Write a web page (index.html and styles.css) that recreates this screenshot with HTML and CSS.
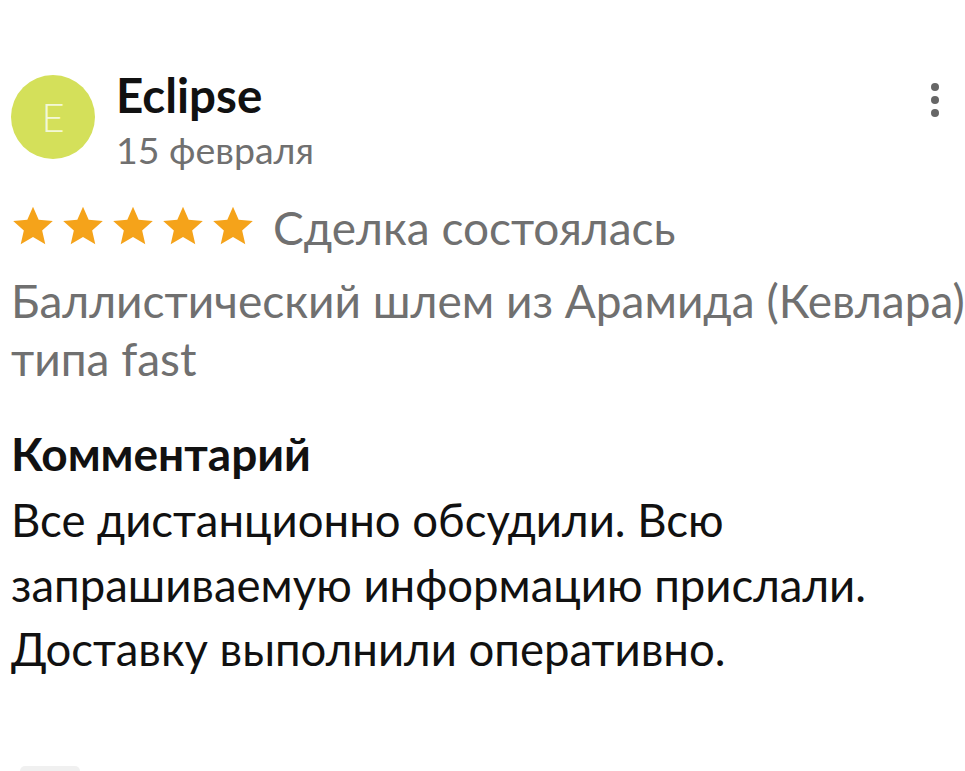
FILE: index.html
```html
<!DOCTYPE html>
<html lang="ru">
<head>
<meta charset="utf-8">
<link rel="stylesheet" href="styles.css">
</head>
<body>
<div class="review">
  <div class="head">
    <div class="avatar">E</div>
    <div class="who">
      <div class="name">Eclipse</div>
      <div class="date">15 февраля</div>
    </div>
    <div class="menu"><span></span><span></span><span></span></div>
  </div>
  <div class="rating">
    <div class="stars">
      <svg viewBox="0 0 24 24"><path d="M12 1.5l3.1 7.1 7.7.7-5.8 5.1 1.7 7.6L12 18l-6.7 4 1.7-7.6-5.8-5.1 7.7-.7z"/></svg>
      <svg viewBox="0 0 24 24"><path d="M12 1.5l3.1 7.1 7.7.7-5.8 5.1 1.7 7.6L12 18l-6.7 4 1.7-7.6-5.8-5.1 7.7-.7z"/></svg>
      <svg viewBox="0 0 24 24"><path d="M12 1.5l3.1 7.1 7.7.7-5.8 5.1 1.7 7.6L12 18l-6.7 4 1.7-7.6-5.8-5.1 7.7-.7z"/></svg>
      <svg viewBox="0 0 24 24"><path d="M12 1.5l3.1 7.1 7.7.7-5.8 5.1 1.7 7.6L12 18l-6.7 4 1.7-7.6-5.8-5.1 7.7-.7z"/></svg>
      <svg viewBox="0 0 24 24"><path d="M12 1.5l3.1 7.1 7.7.7-5.8 5.1 1.7 7.6L12 18l-6.7 4 1.7-7.6-5.8-5.1 7.7-.7z"/></svg>
    </div>
    <span class="status">Сделка состоялась</span>
  </div>
  <div class="item">Баллистический шлем из Арамида (Кевлара) типа fast</div>
  <div class="label">Комментарий</div>
  <div class="comment">Все дистанционно обсудили. Всю запрашиваемую информацию прислали. Доставку выполнили оперативно.</div>
</div>
<div class="next"></div>
</body>
</html>
```
FILE: styles.css
```css
html, body {
  margin: 0;
  padding: 0;
  background: #fff;
  overflow: hidden;
}
body {
  width: 965px;
  height: 771px;
  font-family: Lato, "Noto Sans", sans-serif;
  position: relative;
}
.review {
  padding: 71px 0 0 11px;
}
.head {
  display: flex;
  align-items: flex-start;
}
.avatar {
  width: 84px;
  height: 84px;
  margin: 4px 0 0 0;
  border-radius: 50%;
  background: #d4e05a;
  color: #f3f8d6;
  font-size: 40px;
  font-weight: 300;
  display: flex;
  align-items: center;
  justify-content: center;
  flex: none;
}
.who {
  margin-left: 21px;
  flex: 1;
}
.name {
  font-size: 47.5px;
  font-weight: 700;
  color: #111;
  line-height: 48px;
}
.date {
  font-size: 37.5px;
  color: #707070;
  line-height: 40px;
  margin-top: 11px;
}
.menu {
  display: flex;
  flex-direction: column;
  gap: 5px;
  margin: 12px 26px 0 0;
}
.menu span {
  width: 8px;
  height: 8px;
  border-radius: 50%;
  background: #666;
}
.rating {
  display: flex;
  align-items: flex-start;
  margin-top: 34px;
}
.stars {
  display: flex;
  gap: 6px;
  margin-left: 0;
}
.stars svg {
  width: 44px;
  height: 44px;
  fill: #f5a31a;
}
.status {
  font-size: 46px;
  color: #707070;
  margin-left: 18px;
  line-height: 44px;
  margin-top: 2px;
}
.item {
  font-size: 46px;
  color: #707070;
  line-height: 58px;
  margin-top: 22px;
}
.label {
  font-size: 46px;
  font-weight: 700;
  color: #111;
  margin-top: 41px;
  line-height: 50px;
}
.comment {
  font-size: 45.5px;
  color: #111;
  line-height: 64.5px;
  margin-top: 9px;
}
.next {
  position: absolute;
  left: 20px;
  top: 766px;
  width: 60px;
  height: 5px;
  border-radius: 30px 30px 0 0;
  background: #f0f0f0;
}
```
